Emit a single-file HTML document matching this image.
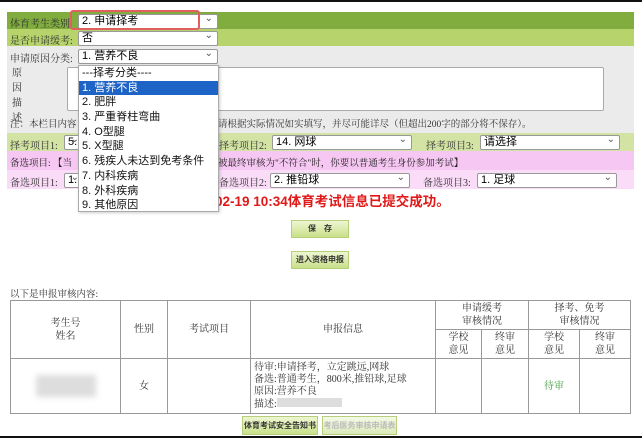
<!DOCTYPE html>
<html><head><meta charset="utf-8"><style>
*{margin:0;padding:0;box-sizing:border-box}
body{width:642px;height:438px;background:#fff;position:relative;overflow:hidden;font-family:"Liberation Sans","Noto Sans CJK SC",sans-serif;font-size:11px;color:#222}
.a{position:absolute}
.serif{font-family:"Liberation Serif","Noto Serif CJK SC",serif;color:#333;font-size:10px}
.sel{position:absolute;background:#fff;border:1px solid #999;border-radius:2px;height:15px;font-size:11px;line-height:13px;padding-left:3px;color:#000}
.sel:after{content:"⌄";position:absolute;right:4px;top:-3px;font-size:10px;color:#555}
.btn{position:absolute;background:linear-gradient(#eef6d2,#c9e08a);border:1px solid #b7cf7a;font-size:8px;text-align:center;font-weight:bold;color:#333}
table{border-collapse:collapse;position:absolute;left:10px;top:300px;width:620px;table-layout:fixed}
td{border:1px solid #999;text-align:center;font-family:"Liberation Serif","Noto Serif CJK SC",serif;font-size:10px;color:#333;line-height:13px;padding:0}
.dd div{height:14.7px;line-height:14.7px;padding-left:3px;font-size:11px;color:#111}
</style></head><body>
<div class="a" style="left:0;top:0;width:642px;height:2px;background:#111"></div>
<div class="a" style="left:0;top:436px;width:642px;height:2px;background:#111"></div>
<div class="a" style="left:7px;top:12px;width:627px;height:17px;background:#80ad3e"></div>
<div class="a" style="left:7px;top:29px;width:627px;height:17px;background:#b6d46b"></div>
<div class="a" style="left:7px;top:46px;width:627px;height:87px;background:#ebebeb"></div>
<div class="a" style="left:7px;top:133px;width:627px;height:18px;background:#d3e3a3"></div>
<div class="a" style="left:7px;top:151px;width:627px;height:19px;background:#f7c7f3"></div>
<div class="a" style="left:7px;top:170px;width:627px;height:19px;background:#fbdcf8"></div>

<div class="a serif" style="left:10px;top:15px">体育考生类别:</div>
<div class="sel" style="left:78px;top:14px;width:140px">2. 申请择考</div>
<div class="a" style="left:70px;top:10px;width:130px;height:20px;border:2px solid #e06060;border-radius:3px"></div>
<div class="a serif" style="left:10px;top:32px">是否申请缓考:</div>
<div class="sel" style="left:78px;top:31px;width:140px">否</div>
<div class="a serif" style="left:10px;top:50px">申请原因分类:</div>
<div class="sel" style="left:78px;top:49px;width:140px">1. 营养不良</div>
<div class="a serif" style="left:12px;top:66px;line-height:15px;width:12px">原因描述</div>
<div class="a" style="left:67px;top:67px;width:537px;height:44px;background:#fff;border:1px solid #aaa;border-radius:2px"></div>
<div class="a serif" style="left:10px;top:116px;font-size:9.5px">注：本栏目内容</div>
<div class="a serif" style="left:218px;top:116px;font-size:9.5px">请根据实际情况如实填写，并尽可能详尽（但超出200字的部分将不保存）。</div>

<div class="a serif" style="left:10px;top:137px">择考项目1:</div>
<div class="sel" style="left:64px;top:135px;width:20px">5.</div>
<div class="a serif" style="left:219px;top:137px">择考项目2:</div>
<div class="sel" style="left:272px;top:135px;width:140px">14. 网球</div>
<div class="a serif" style="left:426px;top:137px">择考项目3:</div>
<div class="sel" style="left:480px;top:135px;width:140px">请选择</div>
<div class="a serif" style="left:10px;top:155px;font-size:9.5px;color:#222">备选项目: 【当</div>
<div class="a serif" style="left:218px;top:155px;font-size:9.5px;color:#222">被最终审核为"不符合"时，你要以普通考生身份参加考试】</div>
<div class="a serif" style="left:10px;top:174px">备选项目1:</div>
<div class="sel" style="left:64px;top:173px;width:20px">1.</div>
<div class="a serif" style="left:219px;top:174px">备选项目2:</div>
<div class="sel" style="left:270px;top:173px;width:140px">2. 推铅球</div>
<div class="a serif" style="left:423px;top:174px">备选项目3:</div>
<div class="sel" style="left:477px;top:173px;width:140px">1. 足球</div>
<div class="a" style="left:215px;top:190px;font-size:13.5px;font-weight:bold;color:#e01818">02-19 10:34体育考试信息已提交成功。</div>

<div class="a dd" style="left:78px;top:65px;width:141px;height:147px;background:#fff;border:1px solid #aaa;box-shadow:1px 1px 3px rgba(0,0,0,.2)">
<div>---择考分类----</div><div style="background:#1e63c6;color:#fff">1. 营养不良</div><div>2. 肥胖</div><div>3. 严重脊柱弯曲</div><div>4. O型腿</div><div>5. X型腿</div><div>6. 残疾人未达到免考条件</div><div>7. 内科疾病</div><div>8. 外科疾病</div><div>9. 其他原因</div>
</div>

<div class="btn" style="left:291px;top:220px;width:58px;height:18px;line-height:16px">保　存</div>
<div class="btn" style="left:291px;top:251px;width:58px;height:18px;line-height:16px">进入资格申报</div>
<div class="a serif" style="left:10px;top:286px;font-size:9.5px">以下是申报审核内容:</div>
<table>
<colgroup><col style="width:110px"><col style="width:47px"><col style="width:83px"><col style="width:185px"><col style="width:46px"><col style="width:47px"><col style="width:51px"><col style="width:51px"></colgroup>
<tr style="height:29px"><td rowspan="2">考生号<br>姓名</td><td rowspan="2">性别</td><td rowspan="2">考试项目</td><td rowspan="2">申报信息</td><td colspan="2">申请缓考<br>审核情况</td><td colspan="2">择考、免考<br>审核情况</td></tr>
<tr style="height:29px"><td>学校<br>意见</td><td>终审<br>意见</td><td>学校<br>意见</td><td>终审<br>意见</td></tr>
<tr style="height:55px"><td><div style="margin:auto;width:60px;height:22px;background:#ddd;filter:blur(3px)"></div></td><td>女</td><td></td><td style="text-align:left;padding-left:3px;line-height:12px">待审:申请择考，立定跳远,网球<br>备选:普通考生，800米,推铅球,足球<br>原因:营养不良<br>描述:<span style="display:inline-block;width:65px;height:9px;background:#ddd"></span></td><td></td><td></td><td style="color:#3a9a3a">待审</td><td></td></tr>
</table>
<div class="btn" style="left:242px;top:416px;width:76px;height:19px;line-height:17px">体育考试安全告知书</div>
<div class="btn" style="left:322px;top:416px;width:75px;height:19px;line-height:17px;color:#bbb;background:linear-gradient(#f4f9e6,#dceab8)">考后医务审核申请表</div>
</body></html>
